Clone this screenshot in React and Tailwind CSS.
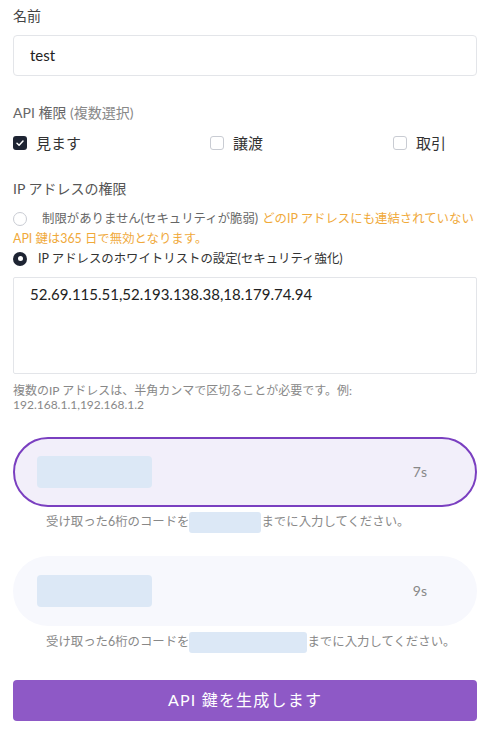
import { useState } from 'react'

const font = { fontFamily: 'Lato, "Noto Sans CJK JP", sans-serif' }

function CheckItem({ checked, label }) {
  return (
    <label className="flex items-center gap-[9px] text-[15px] text-[#333]">
      <span
        className={`w-[14px] h-[14px] rounded-[3px] flex items-center justify-center ${
          checked ? 'bg-[#1e2433]' : 'border border-[#c9ccd3] bg-white'
        }`}
      >
        {checked && (
          <svg width="10" height="10" viewBox="0 0 10 10" fill="none">
            <path d="M2 5.2 L4.1 7.2 L8 3" stroke="white" strokeWidth="1.5" strokeLinecap="round" strokeLinejoin="round" />
          </svg>
        )}
      </span>
      {label}
    </label>
  )
}

function CodeRow({ active, seconds, blankWidth, gap }) {
  return (
    <div>
      <div
        className={`h-[70px] rounded-full flex items-center justify-between ${
          active ? 'bg-[#f2effa] border-2 border-[#7a3fc0] pl-[22px] pr-[48px]' : 'bg-[#f7f8fd] pl-[24px] pr-[50px]'
        }`}
      >
        <div className="w-[115px] h-[32px] rounded-[4px] bg-[#dce8f6]" />
        <span className="text-[14px] text-[#888]">{seconds}</span>
      </div>
      <p className="pl-[33px] flex items-center text-[12.4px] text-[#888] h-[21px]" style={{ marginTop: gap }}>
        受け取った6桁のコードを
        <span className="inline-block h-[21px] rounded-[3px] bg-[#dce8f6]" style={{ width: blankWidth }} />
        までに入力してください。
      </p>
    </div>
  )
}

export default function App() {
  const [name] = useState('test')

  return (
    <div className="w-[490px] h-[730px] bg-white px-[13px] pt-[6px] overflow-hidden" style={font}>
      <div className="text-[14px] text-[#444] leading-[20px]">名前</div>
      <div className="mt-[9px] h-[41px] rounded-[4px] border border-[#e3e5e9] flex items-center px-[16px] text-[15px] text-[#222]">
        {name}
      </div>

      <div className="mt-[27px] text-[14px] text-[#666] leading-[20px]">
        API 権限 <span className="text-[#888]">(複数選択)</span>
      </div>
      <div className="mt-[9px] flex items-center">
        <div className="w-[197px]"><CheckItem checked label="見ます" /></div>
        <div className="w-[183px]"><CheckItem label="譲渡" /></div>
        <div><CheckItem label="取引" /></div>
      </div>

      <div className="mt-[24px] text-[14px] text-[#555] leading-[20px]">IP アドレスの権限</div>

      <div className="mt-[10px] text-[12.4px] leading-[20px]">
        <div className="flex items-center whitespace-nowrap">
          <span className="w-[14px] h-[14px] rounded-full border border-[#c9ccd3] mr-[15px]" />
          <span className="text-[#666]">制限がありません(セキュリティが脆弱)</span>
          <span className="text-[#f0a93a] ml-[4px]">どのIP アドレスにも連結されていない</span>
        </div>
        <div className="text-[#f0a93a]">API 鍵は365 日で無効となります。</div>
      </div>
      <div className="flex items-center text-[12.4px] text-[#333] leading-[20px]">
        <span className="w-[14px] h-[14px] rounded-full bg-[#1e2433] flex items-center justify-center mr-[11px]">
          <span className="w-[5px] h-[5px] rounded-full bg-white" />
        </span>
        IP アドレスのホワイトリストの設定(セキュリティ強化)
      </div>

      <textarea
        className="mt-[8px] block w-full h-[97px] border border-[#e3e5e9] rounded-[2px] px-[16px] py-[5px] text-[15px] text-[#222] resize-none outline-none"
        style={font}
        defaultValue="52.69.115.51,52.193.138.38,18.179.74.94"
      />
      <p className="mt-[10px] text-[12px] leading-[14px] text-[#888]">
        複数のIP アドレスは、半角カンマで区切ることが必要です。例:
        <br />
        192.168.1.1,192.168.1.2
      </p>

      <div className="mt-[25px]">
        <CodeRow active seconds="7s" blankWidth={72} gap={5} />
        <div className="h-[23px]" />
        <CodeRow seconds="9s" blankWidth={118} gap={6} />
      </div>

      <button className="mt-[27px] w-full h-[41px] rounded-[4px] bg-[#8e59c6] text-white text-[16px] tracking-[1.2px]">
        API 鍵を生成します
      </button>
    </div>
  )
}
